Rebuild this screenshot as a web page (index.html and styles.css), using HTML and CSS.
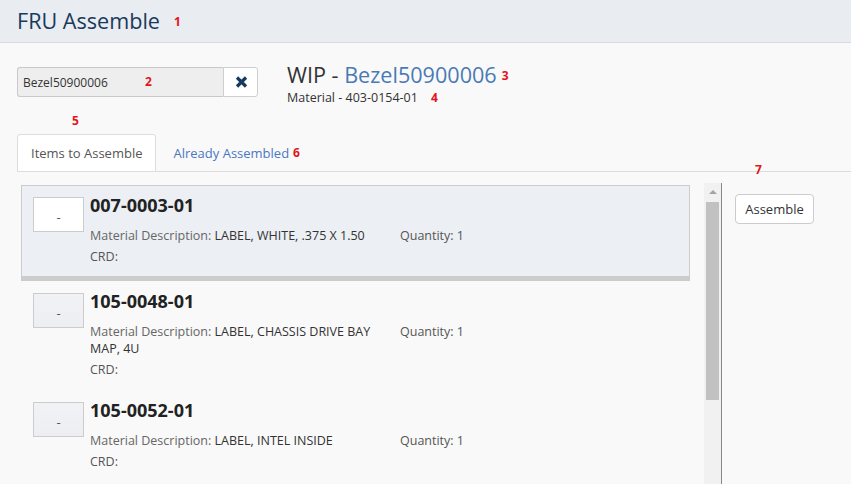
FILE: index.html
```html
<!DOCTYPE html>
<html lang="en">
<head>
<meta charset="utf-8">
<title>FRU Assemble</title>
<link rel="stylesheet" href="styles.css">
</head>
<body>
<header class="topbar">
  <h1 class="page-title">FRU Assemble<span class="mark mark-title">1</span></h1>
</header>
<main class="page">
  <section class="wip-row">
    <div class="search-group">
      <div class="search-field">
        <input class="search-input" type="text" value="Bezel50900006">
        <span class="mark mark-search">2</span>
      </div>
      <button class="clear-btn" type="button" aria-label="Clear">
        <svg width="13" height="12" viewBox="0 0 13 12" aria-hidden="true"><path d="M2 1.5 L11 10.5 M11 1.5 L2 10.5" stroke="#163a5f" stroke-width="3.2" fill="none"/></svg>
      </button>
    </div>
    <div class="wip-info">
      <h2 class="wip-title">WIP - <a class="wip-link" href="#">Bezel50900006</a><span class="mark mark-wip">3</span></h2>
      <div class="wip-material">Material - 403-0154-01<span class="mark mark-material">4</span></div>
    </div>
  </section>
  <div class="mark-row"><span class="mark">5</span></div>
  <nav class="tabs">
    <span class="tab tab-active">Items to Assemble</span>
    <a class="tab tab-link" href="#">Already Assembled</a><span class="mark mark-tab">6</span>
  </nav>
  <section class="workspace">
    <div class="item-panel">
      <div class="items">
        <div class="item item-selected">
          <div class="qty-box">-</div>
          <div class="item-body">
            <div class="part-no">007-0003-01</div>
            <div class="item-row">
              <div class="desc"><span class="label">Material Description:</span> LABEL, WHITE, .375 X 1.50</div>
              <div class="quantity">Quantity: 1</div>
            </div>
            <div class="crd">CRD:</div>
          </div>
        </div>
        <div class="item">
          <div class="qty-box">-</div>
          <div class="item-body">
            <div class="part-no">105-0048-01</div>
            <div class="item-row">
              <div class="desc"><span class="label">Material Description:</span> LABEL, CHASSIS DRIVE BAY MAP, 4U</div>
              <div class="quantity">Quantity: 1</div>
            </div>
            <div class="crd">CRD:</div>
          </div>
        </div>
        <div class="item">
          <div class="qty-box">-</div>
          <div class="item-body">
            <div class="part-no">105-0052-01</div>
            <div class="item-row">
              <div class="desc"><span class="label">Material Description:</span> LABEL, INTEL INSIDE</div>
              <div class="quantity">Quantity: 1</div>
            </div>
            <div class="crd">CRD:</div>
          </div>
        </div>
      </div>
      <div class="scrollbar">
        <div class="scroll-btn"><span class="scroll-arrow"></span></div>
        <div class="scroll-thumb"></div>
      </div>
    </div>
    <aside class="actions">
      <span class="mark mark-actions">7</span>
      <button class="assemble-btn" type="button">Assemble</button>
    </aside>
  </section>
</main>
</body>
</html>
```
FILE: styles.css
```css
* { box-sizing: border-box; }
html, body { margin: 0; padding: 0; }
body {
  width: 851px;
  height: 484px;
  overflow: hidden;
  background: #f9f9f9;
  font-family: "Open Sans", "Noto Sans", sans-serif;
  color: #333;
}
.mark {
  color: #e3141c;
  font-family: "Open Sans", sans-serif;
  font-weight: 700;
  font-size: 12px;
  line-height: 14px;
}
.topbar {
  height: 43px;
  background: #e9ecf1;
  border-bottom: 1px solid #d6dae1;
  padding-left: 17px;
  display: flex;
  align-items: center;
}
.page-title {
  margin: 0;
  font-size: 21.6px;
  font-weight: 400;
  color: #1a3a5c;
  line-height: 30px;
  display: flex;
  align-items: center;
}
.mark-title { margin-left: 14px; margin-top: 2px; }
.page { padding-left: 17px; }
.wip-row {
  display: flex;
  align-items: flex-start;
  margin-top: 24px;
  height: 30px;
}
.search-group { display: flex; height: 30px; }
.search-field { position: relative; }
.search-input {
  width: 206px;
  height: 30px;
  border: 1px solid #c9c9c9;
  border-right: 0;
  border-radius: 3px 0 0 3px;
  background: #eeeeee;
  font-family: "Open Sans", sans-serif;
  font-size: 12px;
  color: #333;
  padding: 0 5px;
  margin: 0;
  outline: none;
}
.mark-search { position: absolute; left: 128px; top: 8px; }
.clear-btn {
  width: 35px;
  height: 30px;
  border: 1px solid #cfcfcf;
  border-radius: 0 3px 3px 0;
  background: #fff;
  margin: 0;
  padding: 0;
  display: flex;
  align-items: center;
  justify-content: center;
}
.clear-btn svg { display: block; margin-left: 1px; }
.wip-info { margin-left: 29px; margin-top: -4px; }
.wip-title {
  margin: 0;
  font-size: 21.6px;
  font-weight: 400;
  line-height: 24px;
  color: #333;
  white-space: nowrap;
}
.wip-link { color: #4a7ab4; text-decoration: none; }
.mark-wip { margin-left: 5px; vertical-align: 3px; }
.wip-material {
  margin-top: 2px;
  font-size: 12.5px;
  line-height: 18px;
  color: #333;
}
.mark-material { margin-left: 13px; }
.mark-row { margin-top: 15px; padding-left: 55px; height: 14px; line-height: 14px; }
.tabs {
  margin-top: 8px;
  height: 38px;
  border-bottom: 1px solid #dddddd;
  display: flex;
  align-items: stretch;
}
.tab {
  font-size: 13px;
  display: flex;
  align-items: center;
  padding: 0 13px;
  text-decoration: none;
}
.tab-active {
  background: #fff;
  border: 1px solid #dddddd;
  border-radius: 3px 3px 0 0;
  color: #555;
  font-weight: 500;
  margin-bottom: -1px;
}
.tab-link { color: #4a78c0; padding-left: 17px; padding-right: 4px; }
.mark-tab { align-self: center; margin-top: 1px; }
.workspace {
  display: flex;
  align-items: flex-start;
  margin-top: 11px;
  height: 320px;
}
.item-panel {
  display: flex;
  width: 705px;
  height: 320px;
  border-right: 1px solid #888;
}
.items {
  width: 687px;
  padding: 2px 14px 0 4px;
  overflow: hidden;
}
.item {
  display: flex;
  align-items: flex-start;
  border: 1px solid transparent;
  border-bottom: 0;
  padding: 11px 11px 11px;
}
.item-selected {
  background: #eceff4;
  border: 1px solid #cccccc;
  border-bottom: 5px solid #cccccc;
  padding-bottom: 10px;
}
.qty-box {
  width: 51px;
  height: 35px;
  flex: none;
  border: 1px solid #cccccc;
  background: linear-gradient(#f1f2f5, #eceef2);
  font-size: 13px;
  color: #555;
  display: flex;
  align-items: center;
  justify-content: center;
  padding-top: 4px;
  margin-right: 6px;
}
.item-selected .qty-box { background: #fff; }
.item-body { flex: 1; font-size: 12.5px; }
.part-no {
  font-size: 18px;
  font-weight: 700;
  color: #222;
  line-height: 20px;
  margin-top: -2px;
  margin-bottom: 12px;
}
.item-row { display: flex; line-height: 17px; }
.desc { width: 300px; margin-right: 10px; color: #333; }
.label { color: #666; }
.quantity { color: #555; }
.crd { margin-top: 4px; line-height: 18px; color: #555; }
.scrollbar {
  width: 17px;
  flex: none;
  background: #f1f1f1;
  display: flex;
  flex-direction: column;
}
.scroll-btn {
  height: 18px;
  display: flex;
  align-items: center;
  justify-content: center;
}
.scroll-arrow {
  width: 0;
  height: 0;
  border-left: 4px solid transparent;
  border-right: 4px solid transparent;
  border-bottom: 4px solid #a3a3a3;
}
.scroll-thumb {
  margin: 1px 2px 0 2px;
  height: 198px;
  background: #c1c1c1;
}
.actions {
  position: relative;
  padding-left: 13px;
  padding-top: 11px;
}
.mark-actions { position: absolute; left: 33px; top: -20px; }
.assemble-btn {
  width: 79px;
  height: 30px;
  border: 1px solid #cccccc;
  border-radius: 4px;
  background: #fff;
  font-family: "Open Sans", sans-serif;
  font-size: 13px;
  color: #333;
  padding: 0;
}
```
